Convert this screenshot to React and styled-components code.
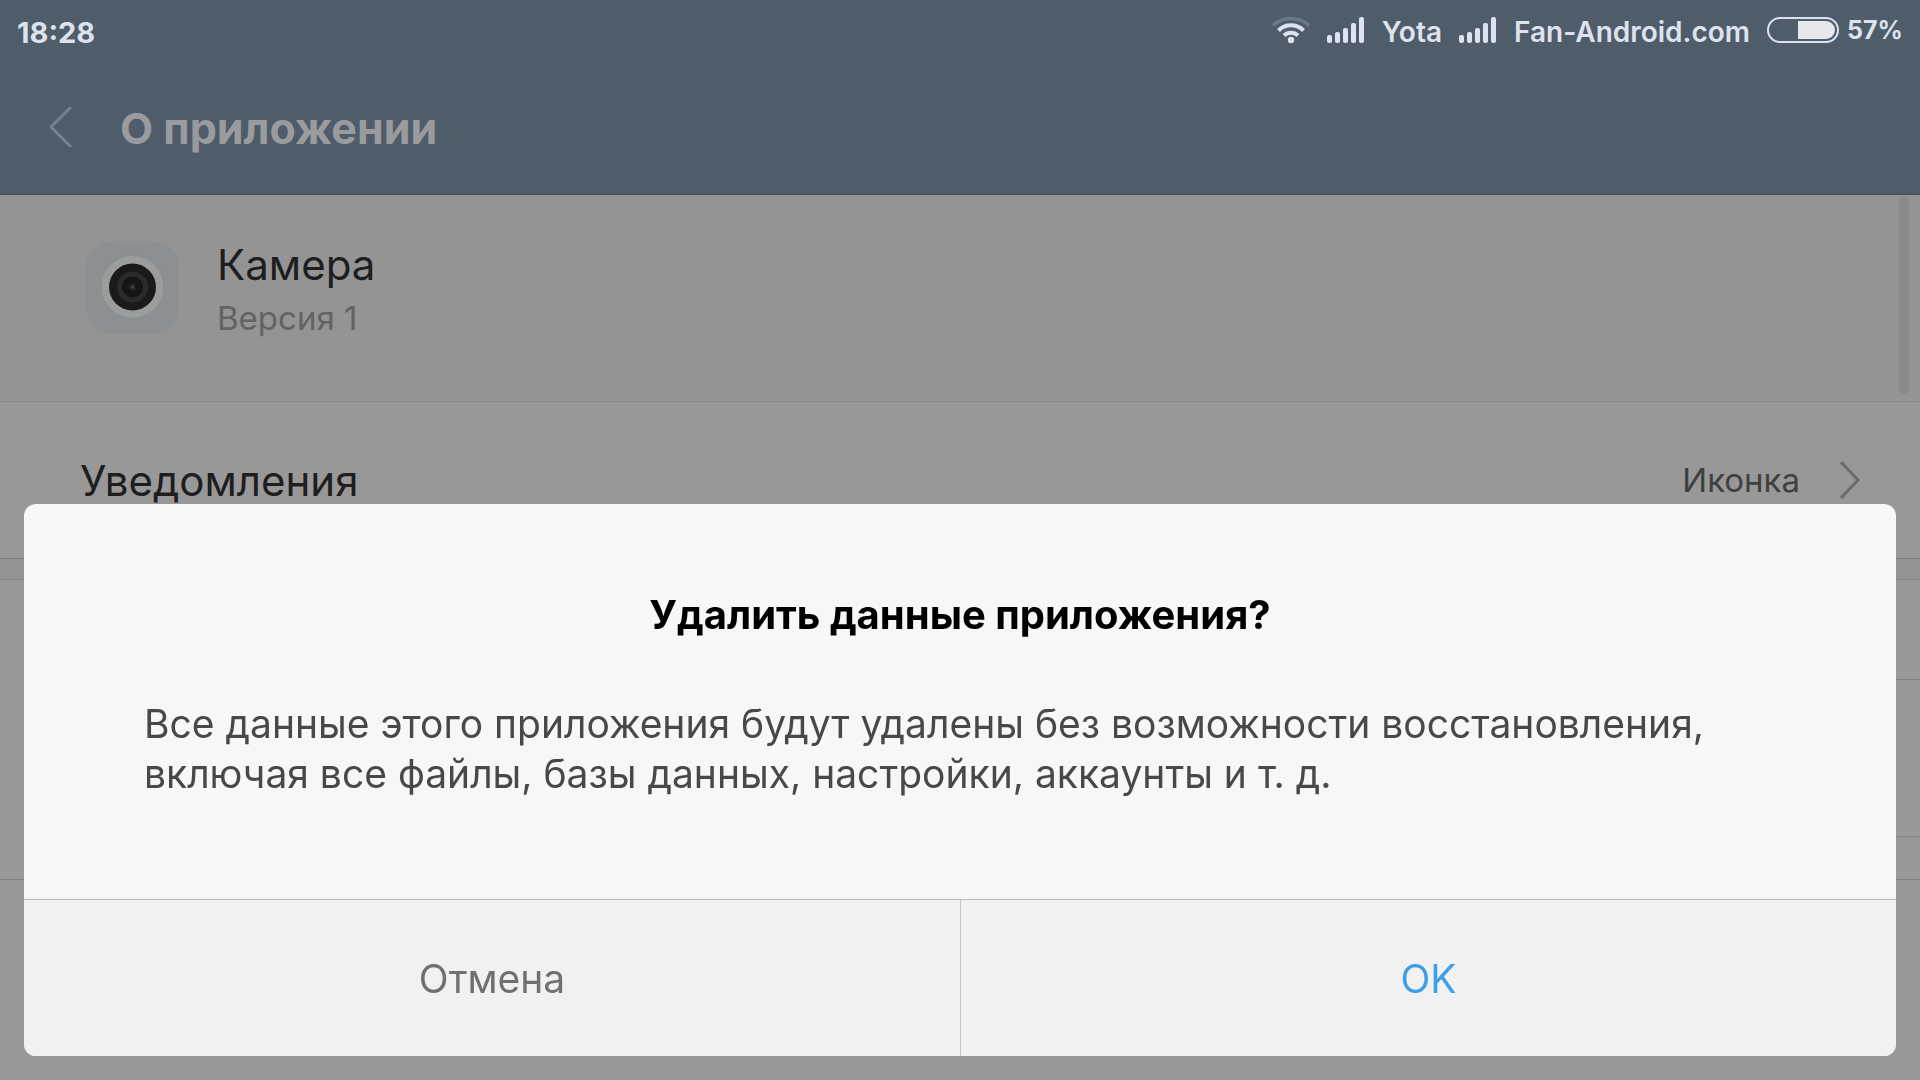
import { useState } from 'react';
import styled, { createGlobalStyle } from 'styled-components';

const GlobalStyle = createGlobalStyle`
  * {
    box-sizing: border-box;
  }

  body {
    margin: 0;
    background: #989898;
    font-family: Inter, "Noto Sans", sans-serif;
    overflow: hidden;
  }

  h1, h2, p {
    margin: 0;
  }

  button {
    border: none;
    padding: 0;
    background: none;
    font-family: inherit;
    cursor: pointer;
  }

  svg {
    display: block;
    flex: none;
  }
`;

const Page = styled.div`
  position: relative;
  display: flex;
  flex-direction: column;
  min-height: 100vh;
  background: #989898;
`;

const Header = styled.header`
  background: #4f5c69;
  border-bottom: 2px solid #4a5460;
`;

const StatusBar = styled.div`
  display: flex;
  align-items: center;
  justify-content: space-between;
  height: 64px;
  padding: 0 17px;
  color: #dde3ee;
  font-size: 28px;
  font-weight: 600;
`;

const Clock = styled.span`
  font-size: 29px;
  font-weight: 700;
`;

const Battery = styled.div`
  display: flex;
  align-items: center;
  gap: 8px;
  font-size: 25px;
  font-weight: 700;
`;

const StatusGroup = styled.div`
  display: flex;
  align-items: center;
  gap: 17px;

  > svg, > ${Battery} {
    margin-bottom: 4px;
  }
`;

const TitleBar = styled.div`
  display: flex;
  align-items: center;
  gap: 47px;
  height: 128px;
  margin-bottom: 1px;
  padding: 0 48px;

  h1 {
    color: #999b9e;
    font-size: 43px;
    font-weight: 700;
  }
`;

const AppInfo = styled.section`
  display: flex;
  align-items: flex-start;
  gap: 38px;
  height: 207px;
  padding: 46px 86px;
  background: #949494;
  border-bottom: 1px solid #868686;
`;

const AppName = styled.h2`
  color: #1e1e1e;
  font-size: 42px;
  font-weight: 400;
  line-height: 48px;
`;

const AppVersion = styled.p`
  color: #636363;
  font-size: 33px;
  line-height: 58px;
`;

const Row = styled.button`
  display: flex;
  align-items: center;
  align-self: flex-end;
  justify-content: space-between;
  width: ${props => props.$inset ? 'calc(100% - 80px)' : '100%'};
  height: ${props => props.$height};
  padding: 0 60px 0 80px;
  border-bottom: 1px solid #828282;
  color: #1e1e1e;
  font-size: 42px;
`;

const RowValue = styled.span`
  display: flex;
  align-items: center;
  gap: 40px;
  color: #404040;
  font-size: 33px;
`;

const Gap = styled.div`
  height: 21px;
  background: #939393;
  border-bottom: 1px solid #848484;
`;

const ScrollThumb = styled.div`
  position: absolute;
  top: 196px;
  right: 11px;
  width: 10px;
  height: 198px;
  border-radius: 5px;
  background: #8b8b8b;
`;

const Overlay = styled.div`
  position: fixed;
  inset: 0;
  display: flex;
  align-items: flex-end;
  padding: 24px;
`;

const Dialog = styled.div`
  flex: 1;
  border-radius: 12px;
  background: #f7f7f7;
  overflow: hidden;
`;

const DialogBody = styled.div`
  padding: 84px 120px 100px;

  h2 {
    color: #000;
    font-size: 40px;
    font-weight: 700;
    line-height: 54px;
    text-align: center;
  }

  p {
    margin-top: 57px;
    color: #484848;
    font-size: 39px;
    line-height: 50px;
  }
`;

const DialogActions = styled.div`
  display: grid;
  grid-template-columns: 1fr 1fr;
  border-top: 1px solid #bcbcbc;
`;

const ActionButton = styled.button`
  height: 156px;
  background: #f1f1f1;
  color: ${props => props.$primary ? '#3f9fe6' : '#707070'};
  font-size: 39px;

  & + & {
    border-left: 1px solid #c4c4c4;
  }
`;

function WifiIcon() {
  return (
    <svg width="38" height="28" viewBox="0 0 38 28" fill="none" strokeWidth="4">
      <path d="M1 9.5 A27 27 0 0 1 37 9.5" stroke="#6b7885" strokeWidth="3.5" />
      <path d="M6.5 14.5 A17.5 17.5 0 0 1 31.5 14.5" stroke="#dde3ee" />
      <path d="M12 19.5 A10 10 0 0 1 26 19.5" stroke="#dde3ee" />
      <circle cx="19" cy="24" r="3.2" fill="#dde3ee" />
    </svg>
  );
}

function SignalIcon() {
  const bars = [8, 11, 15, 20, 26];
  return (
    <svg width="38" height="26" viewBox="0 0 38 26" fill="#dde3ee">
      {bars.map((h, i) => (
        <rect key={h} x={i * 8} y={26 - h} width="5" height={h} rx="2" />
      ))}
    </svg>
  );
}

function BatteryIcon() {
  return (
    <svg width="72" height="26" viewBox="0 0 72 26">
      <rect x="1" y="1" width="70" height="24" rx="12" fill="none" stroke="#dde3ee" strokeWidth="2" />
      <path d="M31 4 H59 A9 9 0 0 1 59 22 H31 Z" fill="#e6e8ec" />
    </svg>
  );
}

function CameraIcon() {
  return (
    <svg width="93" height="93" viewBox="0 0 93 93">
      <rect width="93" height="93" rx="26" fill="#8c9092" />
      <circle cx="46.5" cy="46" r="31.5" fill="#9b9c9c" stroke="#848888" strokeWidth="0.6" />
      <circle cx="46.5" cy="46" r="23.5" fill="#1a1a1a" />
      <circle cx="46.5" cy="46" r="13" fill="none" stroke="#2b2b2b" strokeWidth="5" />
      <circle cx="46.5" cy="46" r="10" fill="#151515" />
      <circle cx="46.5" cy="46" r="4" fill="#222" />
      <circle cx="46.5" cy="46" r="1.5" fill="#484848" />
    </svg>
  );
}

function App() {
  const [open, setOpen] = useState(true);

  return (
    <Page>
      <GlobalStyle />

      <Header>
        <StatusBar>
          <Clock>18:28</Clock>
          <StatusGroup>
            <WifiIcon />
            <SignalIcon />
            <span>Yota</span>
            <SignalIcon />
            <span>Fan-Android.com</span>
            <Battery>
              <BatteryIcon />
              <span>57%</span>
            </Battery>
          </StatusGroup>
        </StatusBar>
        <TitleBar>
          <button aria-label="Назад">
            <svg width="25" height="42" viewBox="0 0 25 42" fill="none" stroke="#75818c" strokeWidth="3" strokeLinecap="round" strokeLinejoin="round">
              <path d="M22 1 L3 20 L22 39" />
            </svg>
          </button>
          <h1>О приложении</h1>
        </TitleBar>
      </Header>

      <AppInfo>
        <CameraIcon />
        <div>
          <AppName>Камера</AppName>
          <AppVersion>Версия 1</AppVersion>
        </div>
      </AppInfo>

      <Row $height="157px">
        <span>Уведомления</span>
        <RowValue>
          Иконка
          <svg width="20" height="38" viewBox="0 0 20 38" fill="none" stroke="#6c6c6c" strokeWidth="3">
            <path d="M1 1 L18 19 L1 37" />
          </svg>
        </RowValue>
      </Row>
      <Gap />
      <Row $height="100px" $inset />
      <Row $height="157px" $inset />
      <Row $height="43px" />
      <ScrollThumb />

      {open && (
        <Overlay>
          <Dialog role="dialog" aria-modal="true" aria-labelledby="dialog-title">
            <DialogBody>
              <h2 id="dialog-title">Удалить данные приложения?</h2>
              <p>
                Все данные этого приложения будут удалены без возможности восстановления,
                включая все файлы, базы данных, настройки, аккаунты и т. д.
              </p>
            </DialogBody>
            <DialogActions>
              <ActionButton onClick={() => setOpen(false)}>Отмена</ActionButton>
              <ActionButton $primary onClick={() => setOpen(false)}>OK</ActionButton>
            </DialogActions>
          </Dialog>
        </Overlay>
      )}
    </Page>
  );
}

export default App;
